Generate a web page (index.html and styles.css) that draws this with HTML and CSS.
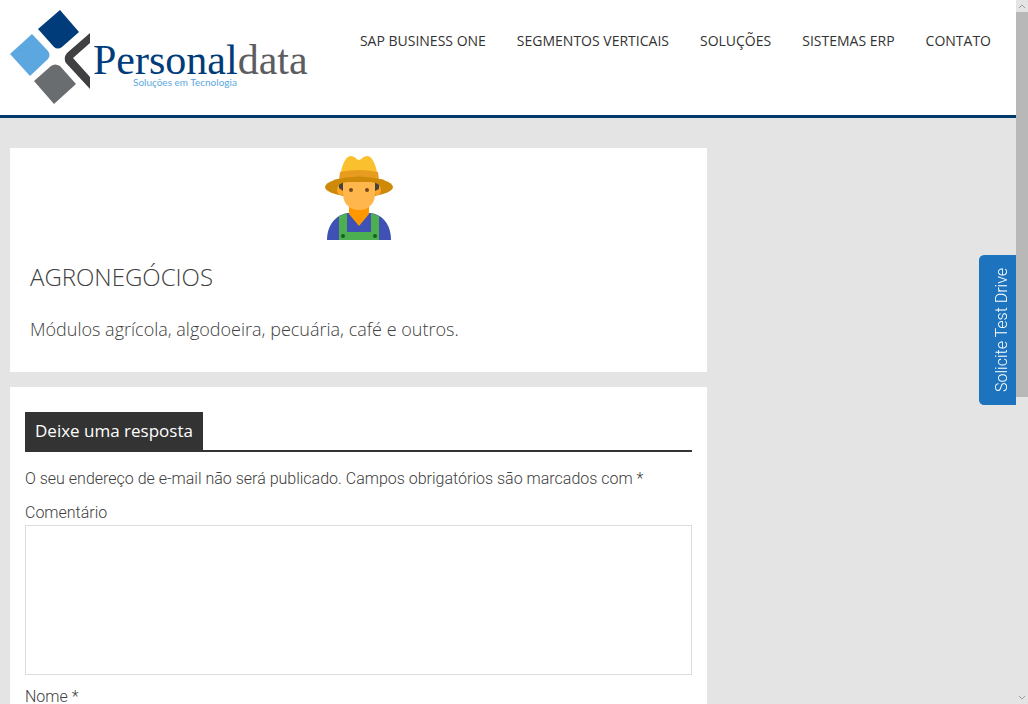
FILE: index.html
```
<!DOCTYPE html>
<html lang="pt-BR">
<head>
<meta charset="utf-8">
<title>Agronegócios - Personaldata</title>
<meta name="viewport" content="width=device-width, initial-scale=1">
<link rel="stylesheet" href="styles.css">
</head>
<body>
<div class="page">
  <header class="header">
    <a class="logo" href="#" aria-label="Personaldata">
      <svg width="300" height="95" viewBox="10 10 300 95">
        <path fill="#003c7a" d="M60 10 79 32 62 47Q58 50 54 47L38 29Z"/>
        <path fill="#5ca7df" d="M32 34 48 51Q51 55 48 59L30 76 10 54Z"/>
        <path fill="#696d70" d="M34 81 51 66Q55 63 60 66L76 84 54 104Z"/>
        <path fill="#403f42" d="M90 33V43L73 58 90 77V89L66 63Q63 58 67 53Z"/>
        <text class="logo-name" x="93" y="74" fill="#003c7a">Personal<tspan fill="#5c5d60">data</tspan></text>
        <text class="logo-tagline" x="133" y="86" fill="#5ca7df">Soluções em Tecnologia</text>
      </svg>
    </a>
    <nav class="nav">
      <a href="#">SAP BUSINESS ONE</a>
      <a href="#">SEGMENTOS VERTICAIS</a>
      <a href="#">SOLUÇÕES</a>
      <a href="#">SISTEMAS ERP</a>
      <a href="#">CONTATO</a>
    </nav>
  </header>
  <main class="content">
    <article class="card article">
      <svg class="farmer" width="68" height="86" viewBox="0 0 68 86" aria-hidden="true">
        <path fill="#3f51b5" d="M2 86C2 69 13 60 23 59H45C57 60 66 70 66 86Z"/>
        <path fill="#4caf50" d="M14 62 22 59V78H46V59L54 62V86H14Z"/>
        <path fill="#ff9800" d="M24 46H44V60L34 72 24 60Z"/>
        <circle cx="18" cy="82" r="2" fill="#1b5e20"/><circle cx="50" cy="82" r="2" fill="#1b5e20"/>
        <ellipse cx="34" cy="33" rx="34" ry="10" fill="#cd8907"/>
        <ellipse cx="16" cy="36" rx="4" ry="5" fill="#ffa726"/><ellipse cx="52" cy="36" rx="4" ry="5" fill="#ffa726"/>
        <path fill="#424242" d="M14 31 18 28H50L54 31V35L50 37H18L14 34Z"/>
        <path fill="#ffb74d" d="M18 28H50V40C50 50 43 56 34 56S18 50 18 40Z"/>
        <path fill="#fbc02d" d="M15 24C17 9 21 2 26 2 30 2 32 6 34 6S38 2 42 2C47 2 51 9 53 24Z"/>
        <path fill="#e79c20" d="M15 18Q34 14 53 18L54 26Q34 20 14 26Z"/>
        <path fill="#cd8907" d="M8 26Q34 19 60 26L55 30Q34 24 13 30Z"/>
        <circle cx="26" cy="36" r="2" fill="#784719"/><circle cx="42" cy="36" r="2" fill="#784719"/>
      </svg>
      <h1>AGRONEGÓCIOS</h1>
      <p>Módulos agrícola, algodoeira, pecuária, café e outros.</p>
    </article>
    <section class="card reply">
      <h2><span>Deixe uma resposta</span></h2>
      <form>
        <p>O seu endereço de e-mail não será publicado. Campos obrigatórios são marcados com *</p>
        <label for="comment">Comentário</label>
        <textarea id="comment"></textarea>
        <label for="author">Nome *</label>
        <input id="author" type="text">
      </form>
    </section>
  </main>
</div>
<button class="test-drive" type="button">Solicite Test Drive</button>
<div class="scrollbar" aria-hidden="true">
  <svg width="12" height="12" viewBox="0 0 12 12"><path d="M3 8 6 5 9 8"/></svg>
  <div class="thumb"></div>
  <svg width="12" height="12" viewBox="0 0 12 12"><path d="M3 4 6 7 9 4"/></svg>
</div>
</body>
</html>
```
FILE: styles.css
```
* { box-sizing: border-box; }
html { height: 100%; overflow: hidden; }
body {
  margin: 0;
  height: 100%;
  overflow: hidden;
  padding-right: 12px;
  background: #e4e4e4;
  color: #404040;
  font: 300 16px/24px Roboto, sans-serif;
}
.header {
  display: flex;
  justify-content: space-between;
  align-items: flex-start;
  padding: 10px 10px 5px;
  background: #fff;
  border-bottom: 3px solid #003a6b;
}
.logo, .logo svg { display: block; }
.logo { padding-bottom: 5px; }
.logo-name { font: 400 42px "Liberation Serif", serif; }
.logo-tagline { font: 400 10px Lato, sans-serif; }
.nav { display: flex; gap: 1px; padding-top: 19px; }
.nav a {
  padding: 0 15px;
  color: #333;
  font: 400 14px/24px "Open Sans", sans-serif;
  text-decoration: none;
  white-space: nowrap;
}
.content {
  display: grid;
  grid-template-columns: 70%;
  gap: 15px;
  padding: 30px 10px 0;
}
.card { background: #fff; }
.article { padding: 6px 20px 30px; }
.farmer { display: block; margin: 0 auto; }
.article h1 {
  margin: 19px 0 21px;
  font: 300 24px/36px "Open Sans", sans-serif;
}
.article p {
  margin: 0;
  font: 300 18px/26px "Open Sans", sans-serif;
}
.reply { padding: 25px 15px; }
.reply h2 {
  display: flex;
  margin: 0 0 15px;
  border-bottom: 2px solid #333;
  color: #fff;
  font: 400 17px/38px "Open Sans", sans-serif;
}
.reply h2 span { padding: 0 10px; background: #333; }
.reply p { margin: 0 0 10px; }
.reply label { display: block; }
.reply textarea, .reply input {
  display: block;
  width: 100%;
  margin-bottom: 10px;
  border: 1px solid #ddd;
  background: #fff;
  font: inherit;
}
.reply textarea { height: 150px; resize: none; }
.reply input { height: 40px; }
.test-drive {
  position: fixed;
  top: 255px;
  right: 12px;
  height: 150px;
  padding: 0 11px 0 2px;
  border: 0;
  border-radius: 0 5px 5px 0;
  background: #1e73be;
  color: #fff;
  font: 300 16px/24px Roboto, sans-serif;
  writing-mode: vertical-rl;
  transform: rotate(180deg);
}
.scrollbar {
  position: fixed;
  inset: 0 0 0 auto;
  display: flex;
  flex-direction: column;
  width: 12px;
  background: #e4e4e4;
}
.scrollbar svg { flex: none; fill: none; stroke: #a0a0a0; stroke-width: 1; }
.scrollbar .thumb {
  height: calc((100% - 24px) * 0.566);
  margin-bottom: auto;
  background: #b8b8b8;
}
```
